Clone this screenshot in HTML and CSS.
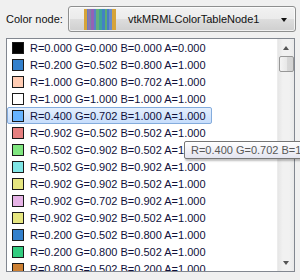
FILE: index.html
```html
<!DOCTYPE html>
<html lang="en">
<head>
  <meta charset="UTF-8" />
  <title>Color table</title>
  <link rel="stylesheet" href="styles.css">
</head>
<body>
  <div class="panel">
    <div class="node-row">
      <span class="node-label">Color node:</span>
      <div class="combo">
        <span class="combo-bars"></span>
        <span class="combo-text">vtkMRMLColorTableNode1</span>
        <span class="combo-arrow"></span>
      </div>
    </div>

    <div class="list">
      <ul class="rows">
        <li><span class="swatch" style="background:#000000"></span>R=0.000 G=0.000 B=0.000 A=0.000</li>
        <li><span class="swatch" style="background:#3380cc"></span>R=0.200 G=0.502 B=0.800 A=1.000</li>
        <li><span class="swatch" style="background:#ffccb3"></span>R=1.000 G=0.800 B=0.702 A=1.000</li>
        <li><span class="swatch" style="background:#ffffff"></span>R=1.000 G=1.000 B=1.000 A=1.000</li>
        <li class="selected"><span class="swatch" style="background:#66b3ff"></span>R=0.400 G=0.702 B=1.000 A=1.000</li>
        <li><span class="swatch" style="background:#e68080"></span>R=0.902 G=0.502 B=0.502 A=1.000</li>
        <li><span class="swatch" style="background:#80e680"></span>R=0.502 G=0.902 B=0.502 A=1.000</li>
        <li><span class="swatch" style="background:#80e6e6"></span>R=0.502 G=0.902 B=0.902 A=1.000</li>
        <li><span class="swatch" style="background:#e6e680"></span>R=0.902 G=0.902 B=0.502 A=1.000</li>
        <li><span class="swatch" style="background:#e6b3e6"></span>R=0.902 G=0.702 B=0.902 A=1.000</li>
        <li><span class="swatch" style="background:#e6e680"></span>R=0.902 G=0.902 B=0.502 A=1.000</li>
        <li><span class="swatch" style="background:#3380cc"></span>R=0.200 G=0.502 B=0.800 A=1.000</li>
        <li><span class="swatch" style="background:#33cc80"></span>R=0.200 G=0.800 B=0.502 A=1.000</li>
        <li><span class="swatch" style="background:#cc8033"></span>R=0.800 G=0.502 B=0.200 A=1.000</li>
      </ul>
      <div class="scrollbar">
        <span class="arrow-up"></span>
        <span class="thumb"></span>
        <span class="track"></span>
        <span class="arrow-down"></span>
      </div>
    </div>

    <div class="tooltip">R=0.400 G=0.702 B=1.000 A=1.000</div>
  </div>
</body>
</html>
```

FILE: styles.css
```css
html, body {
  margin: 0;
  padding: 0;
  background: #f0f0f0;
  overflow: hidden;
}
body {
  font-family: "Liberation Sans", Arial, sans-serif;
  font-size: 11px;
  color: #000;
}
.panel {
  position: relative;
  width: 300px;
  height: 280px;
  overflow: hidden;
}

/* top row with the node selector */
.node-row {
  display: flex;
  align-items: center;
  padding: 6px 0 0 6px;
}
.node-label {
  width: 62px;
  font-size: 11px;
  color: #111;
}
.combo {
  box-sizing: border-box;
  width: 228px;
  height: 26px;
  display: flex;
  align-items: center;
  padding: 0 8px 0 15px;
  border: 1px solid #8e8f8f;
  border-radius: 3px;
  background: linear-gradient(#f2f2f2 0%, #ebebeb 50%, #dddddd 51%, #cfcfcf 100%);
  box-shadow: inset 0 0 0 1px rgba(255, 255, 255, 0.7);
}
.combo-bars {
  width: 32px;
  height: 21px;
  margin-top: 1px;
  background: linear-gradient(to right,
    #d6a43a 0, #d6a43a 3px,
    #6c7cbc 3px, #6c7cbc 4px,
    #8a78b0 4px, #8a78b0 6px,
    #7884a8 6px, #7884a8 7px,
    #9462b4 7px, #9462b4 10px,
    #5a80c8 10px, #5a80c8 12px,
    #62b07c 12px, #62b07c 15px,
    #3ea49c 15px, #3ea49c 18px,
    #4282c4 18px, #4282c4 21px,
    #5cae74 21px, #5cae74 23px,
    #4a7cc4 23px, #4a7cc4 25px,
    #6a8cc8 25px, #6a8cc8 28px,
    #d6a43a 28px, #d6a43a 32px);
}
.combo-text {
  flex: 1;
  margin-left: 12px;
  color: #111;
}
.combo-arrow {
  width: 0;
  height: 0;
  border-left: 3.5px solid transparent;
  border-right: 3.5px solid transparent;
  border-top: 4px solid #111;
  margin-top: 1px;
}

/* color list */
.list {
  box-sizing: border-box;
  position: relative;
  width: 289px;
  height: 234px;
  margin: 6px 0 0 6px;
  border: 1px solid #828790;
  background: #fff;
  display: flex;
  overflow: hidden;
}
.rows {
  list-style: none;
  margin: 0;
  padding: 0;
  flex: 1;
}
.rows li {
  box-sizing: border-box;
  height: 17px;
  width: 205px;
  display: flex;
  align-items: center;
  padding-left: 4px;
  color: #10103a;
  white-space: nowrap;
  border: 1px solid transparent;
  border-radius: 2px;
}
.rows li.selected {
  border-color: #84acdd;
  background: linear-gradient(#e4effd, #c6ddfc);
}
.swatch {
  box-sizing: border-box;
  width: 12px;
  height: 12px;
  margin-right: 6px;
  border: 1px solid #1a1a1a;
  flex: none;
}

/* scrollbar */
.scrollbar {
  width: 16px;
  display: flex;
  flex-direction: column;
  align-items: center;
  background: linear-gradient(to right, #e6e6e6, #f1f1f1 30%, #f1f1f1 70%, #e9e9e9);
  border-left: 1px solid #ececec;
}
.arrow-up, .arrow-down {
  width: 0;
  height: 0;
  border-left: 3.5px solid transparent;
  border-right: 3.5px solid transparent;
  margin: 7px 0 6px;
}
.arrow-up {
  border-bottom: 4px solid #555;
}
.arrow-down {
  border-top: 4px solid #555;
  margin: 5px 0 6px;
}
.thumb {
  box-sizing: border-box;
  width: 15px;
  height: 16px;
  border: 1px solid #979797;
  border-radius: 2px;
  background: linear-gradient(to right, #f4f4f4, #e8e8e8 50%, #d8d8d8 51%, #d2d2d2);
}
.track {
  flex: 1;
}

/* tooltip over the list */
.tooltip {
  position: absolute;
  left: 184px;
  top: 141px;
  height: 18px;
  box-sizing: border-box;
  padding: 0 6px;
  line-height: 16px;
  white-space: nowrap;
  color: #575757;
  border: 1px solid #767676;
  border-radius: 2px;
  background: linear-gradient(#ffffff, #e4e5f0);
  box-shadow: 1px 2px 2px rgba(0, 0, 0, 0.25);
}
```
